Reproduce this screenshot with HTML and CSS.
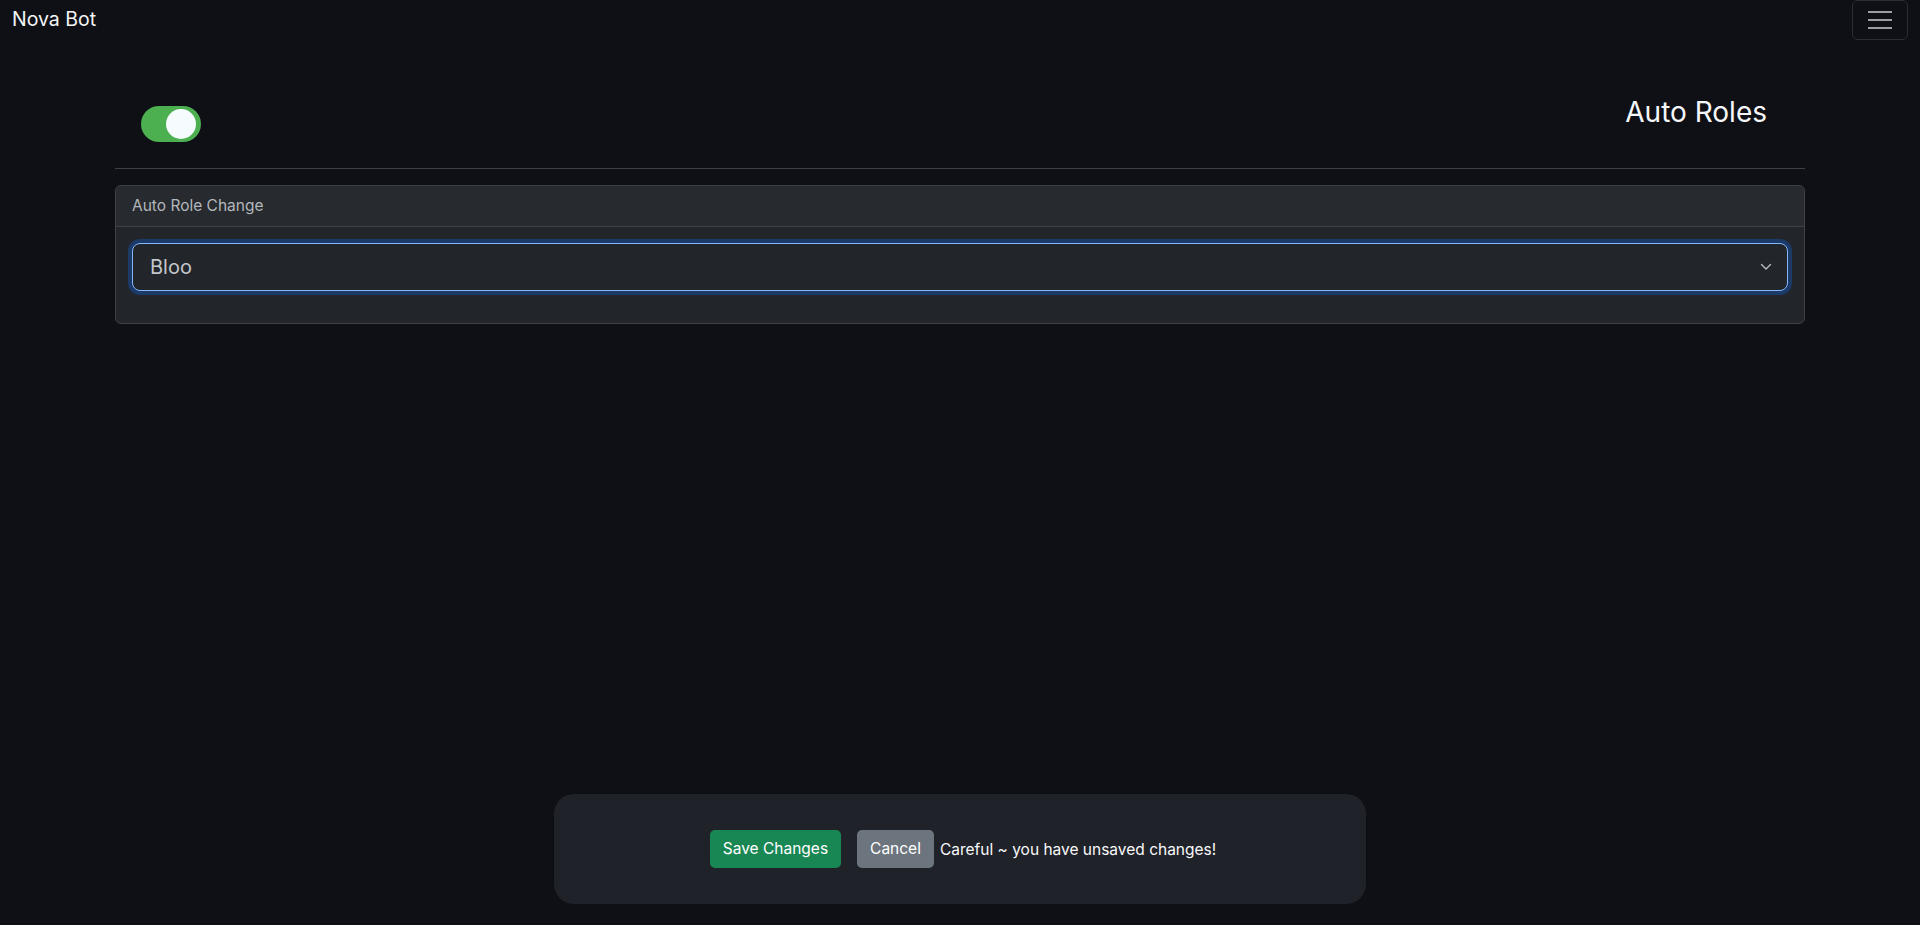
FILE: index.html
```html
<!DOCTYPE html>
<html lang="en">
<head>
<meta charset="utf-8">
<title>Nova Bot - Auto Roles</title>
<link rel="stylesheet" href="styles.css">
</head>
<body>
<nav class="navbar">
  <a class="brand">Nova Bot</a>
  <button class="toggler" aria-label="Toggle navigation">
    <svg width="24" height="18" viewBox="0 0 24 18"><path d="M0 1h24M0 9h24M0 17h24" stroke="#9a9ea3" stroke-width="2"/></svg>
  </button>
</nav>
<main class="main">
  <div class="head-row">
    <div class="switch"><span class="knob"></span></div>
    <h1 class="title">Auto Roles</h1>
  </div>
  <hr class="divider">
  <section class="card">
    <div class="card-header">Auto Role Change</div>
    <div class="card-body">
      <div class="select">
        <span>Bloo</span>
        <svg width="12" height="8" viewBox="0 0 12 8"><path d="M1.5 1.5l4.5 4.5 4.5-4.5" fill="none" stroke="#b8bcc0" stroke-width="1.4" stroke-linecap="round" stroke-linejoin="round"/></svg>
      </div>
    </div>
  </section>
</main>
<div class="unsaved">
  <button class="btn btn-save">Save Changes</button>
  <button class="btn btn-cancel">Cancel</button>
  <span class="warn">Careful ~ you have unsaved changes!</span>
</div>
</body>
</html>
```
FILE: styles.css
```css
* { box-sizing: border-box; }
html, body { margin: 0; padding: 0; }
body {
  background: #0f1015;
  color: #f1f3f5;
  font-family: Inter, "Noto Sans", sans-serif;
  height: 925px;
  overflow: hidden;
}
.navbar {
  display: flex;
  justify-content: space-between;
  align-items: flex-start;
  height: 40px;
  padding: 0 12px;
}
.brand {
  font-size: 19.5px;
  line-height: 30px;
  padding-top: 4px;
  color: #f3f5f7;
}
.toggler {
  width: 56px;
  height: 40px;
  background: transparent;
  border: 1px solid #2b2d33;
  border-radius: 6px;
  display: flex;
  align-items: center;
  justify-content: center;
  padding: 0;
}
.main {
  margin: 0 115px;
}
.head-row {
  display: flex;
  justify-content: space-between;
  align-items: flex-start;
  margin-top: 55px;
  height: 47px;
}
.switch {
  width: 60px;
  height: 36px;
  margin-top: 11px;
  margin-left: 26px;
  background: #4caf50;
  border-radius: 18px;
  display: flex;
  align-items: center;
  justify-content: flex-end;
  padding-right: 5px;
}
.knob {
  width: 30px;
  height: 30px;
  border-radius: 50%;
  background: #f6fcfd;
}
.title {
  margin: 0 38px 0 0;
  font-size: 28px;
  font-weight: 400;
  line-height: 34px;
  color: #f5f7fa;
}
.divider {
  margin: 26px 0 16px;
  border: 0;
  border-top: 1px solid #3d3f44;
  height: 0;
}
.card {
  background: #222529;
  border: 1px solid #3d4045;
  border-radius: 6px;
}
.card-header {
  background: #272a2e;
  border-bottom: 1px solid #3d4045;
  padding: 8px 16px;
  font-size: 15.5px;
  line-height: 24px;
  color: #b3b8bd;
  border-radius: 6px 6px 0 0;
}
.card-body {
  padding: 16px;
}
.select {
  height: 48px;
  margin-bottom: 16px;
  border: 1px solid #86b7fe;
  border-radius: 8px;
  box-shadow: 0 0 0 4px rgba(13, 110, 253, 0.3);
  background: #222529;
  display: flex;
  align-items: center;
  justify-content: space-between;
  padding: 0 15px 0 17px;
  font-size: 20px;
  color: #c3c7cb;
}
.unsaved {
  position: fixed;
  left: 554px;
  top: 794px;
  width: 812px;
  height: 110px;
  background: #202229;
  border-radius: 20px;
  display: flex;
  align-items: center;
  justify-content: center;
  padding-left: 6px;
}
.btn {
  font-family: Inter, "Noto Sans", sans-serif;
  font-size: 15.5px;
  line-height: 24px;
  padding: 6px 12px;
  border: 1px solid transparent;
  border-radius: 5px;
  color: #fff;
  white-space: nowrap;
}
.btn-save {
  background: #198754;
  margin-right: 16px;
}
.btn-cancel {
  background: #6c757d;
}
.warn {
  margin-left: 6px;
  font-size: 15.5px;
  color: #f8f9fa;
  white-space: nowrap;
}
```
